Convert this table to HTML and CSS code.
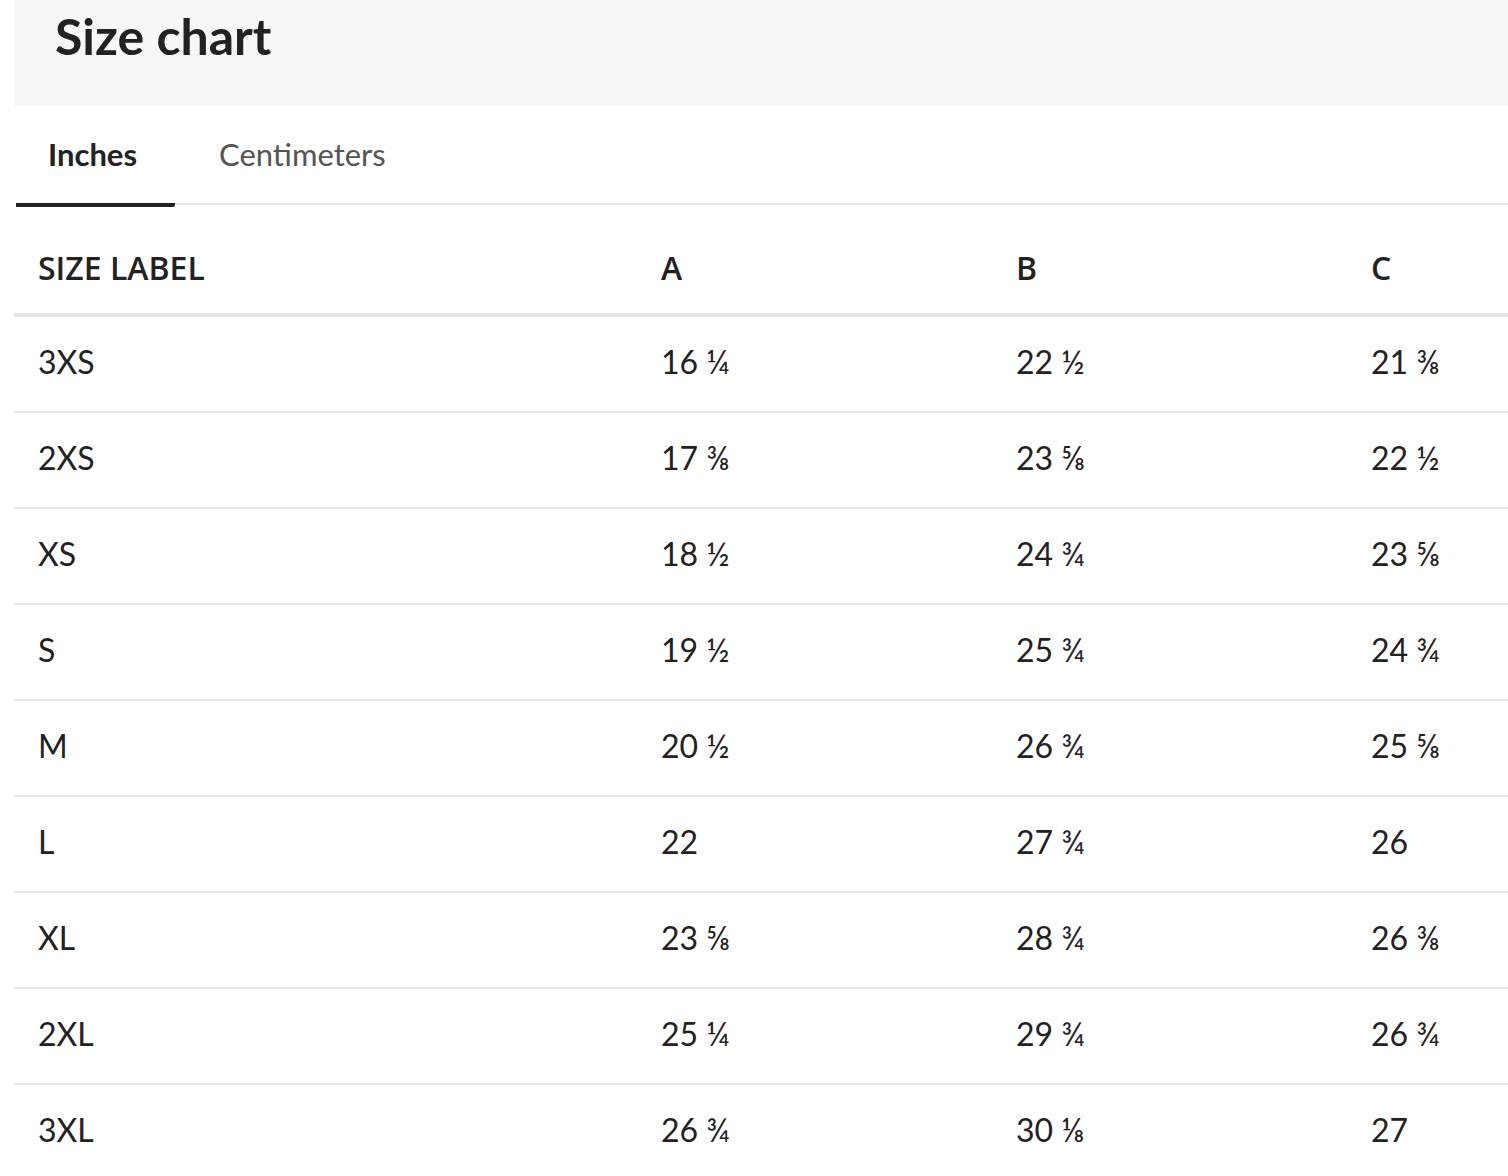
FILE: index.html
```html
<!DOCTYPE html>
<html>
<head>
<meta charset="utf-8">
<link rel="stylesheet" href="styles.css">
</head>
<body>
<div class="page">
  <div class="header"><h1 class="title">Size chart</h1></div>
  <div class="tabs">
    <div class="tab active">Inches</div>
    <div class="tab">Centimeters</div>
  </div>
  <table class="chart">
    <colgroup>
      <col class="c-label"><col class="c-val"><col class="c-val"><col class="c-last">
    </colgroup>
    <thead>
      <tr><th>SIZE LABEL</th><th>A</th><th>B</th><th>C</th></tr>
    </thead>
    <tbody>
      <tr><td>3XS</td><td>16 ¼</td><td>22 ½</td><td>21 ⅜</td></tr>
      <tr><td>2XS</td><td>17 ⅜</td><td>23 ⅝</td><td>22 ½</td></tr>
      <tr><td>XS</td><td>18 ½</td><td>24 ¾</td><td>23 ⅝</td></tr>
      <tr><td>S</td><td>19 ½</td><td>25 ¾</td><td>24 ¾</td></tr>
      <tr><td>M</td><td>20 ½</td><td>26 ¾</td><td>25 ⅝</td></tr>
      <tr><td>L</td><td>22</td><td>27 ¾</td><td>26</td></tr>
      <tr><td>XL</td><td>23 ⅝</td><td>28 ¾</td><td>26 ⅜</td></tr>
      <tr><td>2XL</td><td>25 ¼</td><td>29 ¾</td><td>26 ¾</td></tr>
      <tr><td>3XL</td><td>26 ¾</td><td>30 ⅛</td><td>27</td></tr>
    </tbody>
  </table>
</div>
</body>
</html>
```
FILE: styles.css
```css
html, body {
  margin: 0;
  padding: 0;
  background: #ffffff;
}
body {
  font-family: "Lato", "Noto Sans", sans-serif;
  color: #222222;
  overflow: hidden;
}
.page {
  margin-left: 14px;
  width: 1494px;
}
.header {
  height: 106px;
  background: #f7f7f7;
  padding-left: 41px;
  box-sizing: border-box;
}
.title {
  margin: 0;
  font-size: 50px;
  font-weight: 700;
  line-height: 72px;
  color: #222222;
}
.tabs {
  display: flex;
  margin-left: 2px;
  border-bottom: 2px solid #e5e5e5;
  height: 97px;
}
.tab {
  font-size: 31px;
  line-height: 97px;
  color: #555555;
  padding: 0 32px;
  box-sizing: border-box;
}
.tab.active {
  font-weight: 700;
  color: #222222;
  width: 159px;
  border-bottom: 4px solid #222222;
  border-radius: 0 2px 2px 0;
  margin-bottom: -2px;
  height: 101px;
}
.tab + .tab {
  margin-left: 12px;
}
.chart {
  width: 1494px;
  border-collapse: collapse;
  table-layout: fixed;
}
.c-label { width: 623px; }
.c-val { width: 355px; }
.c-last { width: 161px; }
.chart th {
  font-family: "Open Sans", sans-serif;
  font-weight: 600;
  font-size: 32px;
  text-align: left;
  padding: 17px 0 0 24px;
  height: 91px;
  border-bottom: 4px solid #e5e5e5;
  color: #222222;
  white-space: nowrap;
}
.chart td {
  font-size: 32px;
  padding: 0 0 5px 24px;
  height: 89px;
  border-bottom: 2px solid #e5e5e5;
  color: #222222;
  white-space: nowrap;
}
```
